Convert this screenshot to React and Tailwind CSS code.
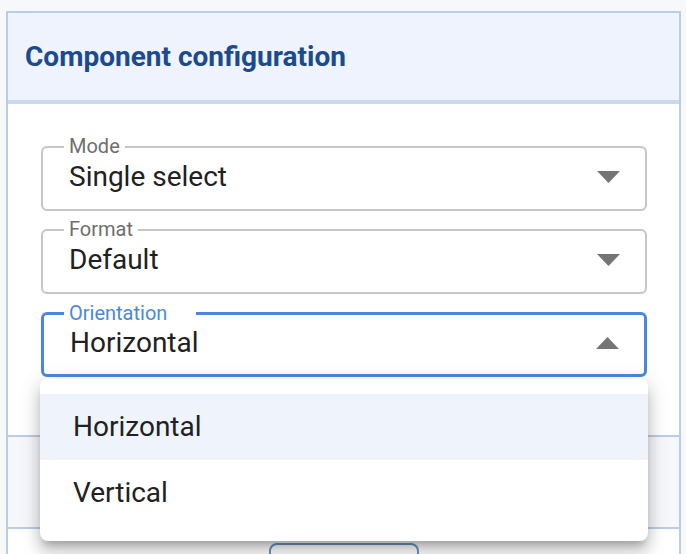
import { useState } from 'react';

const Arrow = ({ up }) => (
  <svg width="23" height="12" viewBox="0 0 23 12" className="shrink-0">
    <path d={up ? 'M0 12 L11.5 0 L23 12 Z' : 'M0 0 L11.5 12 L23 0 Z'} fill="#757575" />
  </svg>
);

const SelectField = ({ label, value, open, children }) => (
  <div
    className={`relative h-[65px] rounded-[6px] flex items-center justify-between pl-[26px] pr-[25px] pb-[4px] ${
      open ? 'border-[3px] border-[#4a89d9]' : 'border-2 border-[#c6c6c6]'
    }`}
  >
    <span
      className={`absolute top-[-13px] pl-[5px] bg-white text-[20px] leading-[22px] ${
        open ? 'left-[20px] pr-[29px] text-[#4a89d9]' : 'left-[21px] pr-[5px] text-[#6e6e6e]'
      }`}
    >
      {label}
    </span>
    <span className="text-[28px] text-[#212121]">{value}</span>
    <Arrow up={open} />
    {children}
  </div>
);

export default function App() {
  const [orientation] = useState('Horizontal');
  const options = ['Horizontal', 'Vertical'];

  return (
    <div className="min-h-screen bg-[#f7f8fc] pt-[11px] px-[6px] font-['Roboto',sans-serif]">
      <div className="w-[675px] border-2 border-[#b9cde6] bg-white">
        {/* Header */}
        <div className="h-[91px] bg-[#eef3fd] border-b-4 border-[#cbd8ee] flex items-center px-[17px]">
          <h2 className="text-[28px] font-bold text-[#1c4b8d]">
            Component configuration
          </h2>
        </div>

        {/* Fields */}
        <div className="pt-[42px] pb-[58px] pl-[33px] pr-[32px] flex flex-col gap-[18px]">
          <SelectField label="Mode" value="Single select" />
          <SelectField label="Format" value="Default" />
          <SelectField label="Orientation" value={orientation} open>
            <div className="absolute left-[-4px] right-[-4px] top-[calc(100%+5px)] z-10 bg-white rounded-[8px] py-[15px] shadow-[0_7px_7px_-4px_rgba(0,0,0,0.2),0_11px_14px_1px_rgba(0,0,0,0.14),0_4px_20px_3px_rgba(0,0,0,0.12)]">
              {options.map((o) => (
                <div
                  key={o}
                  className={`h-[66px] flex items-center px-[33px] text-[28px] text-[#212121] ${
                    o === orientation ? 'bg-[#eff4fc]' : ''
                  }`}
                >
                  {o}
                </div>
              ))}
            </div>
          </SelectField>
        </div>

        {/* Section behind menu */}
        <div className="h-[94px] border-y-2 border-[#b9cde6] bg-[#f5f7fb]"></div>

        {/* Footer */}
        <div className="pt-[14px] flex justify-center">
          <button className="w-[150px] h-[40px] border-2 border-[#6c94c6] rounded-[8px] bg-white"></button>
        </div>
      </div>
    </div>
  );
}
